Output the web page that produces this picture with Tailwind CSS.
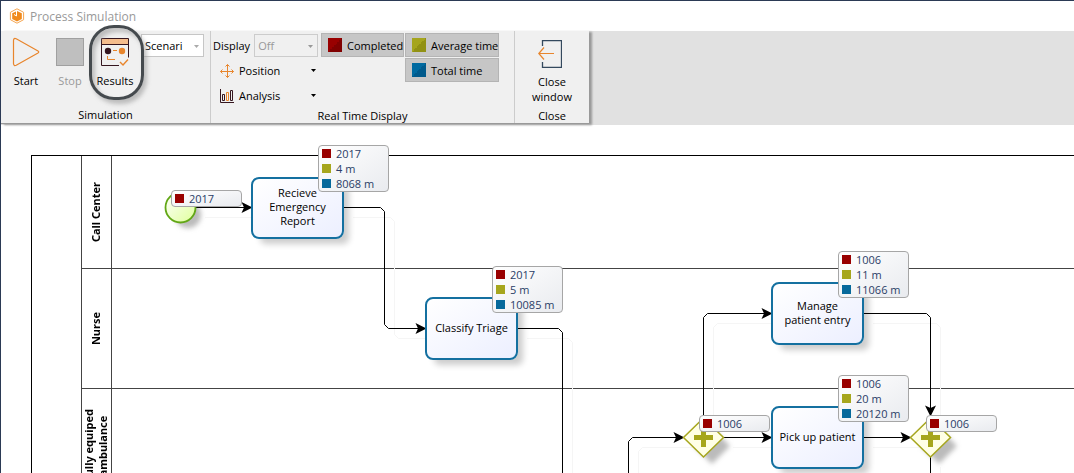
<!DOCTYPE html>
<html lang="en">
<head>
<meta charset="utf-8">
<title>Process Simulation</title>
<script src="https://cdn.jsdelivr.net/npm/@tailwindcss/browser@4"></script>
</head>
<body class="bg-white">
<div class="flex h-screen flex-col overflow-hidden border-t border-l border-[#2b3a55] bg-white font-['Open_Sans','Noto_Sans',sans-serif] text-[11px] leading-[15px] text-black">

  <header class="flex h-[30px] shrink-0 items-center gap-[5px] pl-2">
    <svg class="size-4" viewBox="0 0 16 16" aria-hidden="true">
      <path d="M8 .8 14.6 4.3V11.7L8 15.2 1.4 11.7V4.3Z" fill="#fff" stroke="#f5a550" stroke-width="1"/>
      <path d="M8 3 12.8 5.2V11L8 13.4 3.2 11V5.2Z" fill="#f08a1c"/>
      <path d="M7.500 3V8L5 6.500" fill="none" stroke="#fff" stroke-width="1"/>
    </svg>
    <h1 class="text-[12px] text-[#999]">Process Simulation</h1>
  </header>

  <div class="z-10 flex h-[94px] shrink-0 bg-[#e1e1e1]">
    <div class="flex h-[93px] border-b border-[#999] bg-[#f0f0f0] shadow-[3px_1px_2px_#999]">

      <section class="flex w-[210px] flex-col border-r border-[#ccc]">
        <div class="flex h-[76px] items-start pt-[6px]">
          <button class="flex w-[50px] flex-col items-center gap-[6px]">
            <svg class="h-[30px] w-7" viewBox="0 0 28 30" fill="none" stroke="#e8852c" stroke-width="1.2" aria-hidden="true"><path d="M1.5 3.2V26.8Q1.8 29.3 4.2 28.2L26 16Q27.5 15 26 14L4.2 1.8Q1.8.7 1.5 3.2Z"/></svg>
            Start
          </button>
          <button class="flex w-[38px] flex-col items-center gap-[7px] pt-px text-[#999]" disabled>
            <span class="size-7 border border-[#a0a0a0] bg-[#bfbfbf]"></span>
            Stop
          </button>
          <button class="relative flex w-[52px] flex-col items-center gap-[7px] pt-px">
            <svg class="size-7" viewBox="0 0 28 28" fill="none" aria-hidden="true">
              <path d="M.5.5H27.500V6.500H.5Z" fill="#f5bd8d"/>
              <path d="M18 27.500H.5V.5H27.500V19.500M.5 6.500H27.500" stroke="#35161f"/>
              <circle cx="7" cy="13" r="3.2" fill="#35161f"/><circle cx="21" cy="13" r="3.2" fill="#e8852c"/>
              <path d="M12 12.500H16M6.500 18V21.500H14" stroke="#e8852c"/>
              <path d="M19 24 22 27 27 21.500" stroke="#e8852c" stroke-width="1.4"/>
            </svg>
            Results
            <span class="absolute -top-3 left-0 z-10 h-[75px] w-[55px] rounded-[25px] border-[3px] border-[#454a4e] shadow-[3px_4px_4px_#9999,inset_3px_4px_4px_#9999]"></span>
          </button>
          <div class="relative -mt-[3px]">
            <select aria-label="Scenario" class="block h-[23px] w-[63px] appearance-none border border-[#c6c6c6] bg-white pl-[3px]"><option>Scenari</option></select>
            <svg class="absolute top-[11px] right-[5px] h-[3px] w-[5px]" viewBox="0 0 5 3" fill="#aaa" aria-hidden="true"><path d="M0 0H5L2.500 3Z"/></svg>
          </div>
        </div>
        <h2 class="text-center">Simulation</h2>
      </section>

      <section class="flex w-[304px] flex-col border-r border-[#ccc]">
        <div class="flex h-[78px] items-start pt-[2px]">
          <div class="w-[107px]">
            <div class="flex h-[25px] items-center gap-1 pl-[2px]">
              <label for="display">Display</label>
              <div class="relative ml-auto">
                <select id="display" disabled class="block h-[23px] w-16 appearance-none border border-[#ccc] pl-[3px] text-[#999]"><option>Off</option></select>
                <svg class="absolute top-[11px] right-[5px] h-[3px] w-[5px]" viewBox="0 0 5 3" fill="#999" aria-hidden="true"><path d="M0 0H5L2.500 3Z"/></svg>
              </div>
            </div>
            <button class="flex h-[25px] w-full items-center pr-[2px] pl-[9px]">
              <svg class="mr-[5px] size-[14px]" viewBox="0 0 14 14" fill="none" stroke="#e8852c" aria-hidden="true"><path d="M.5 7.500H13.500M7.500 .5V13.500M2.500 5.500 .5 7.500 2.500 9.500M11.500 5.500 13.500 7.500 11.500 9.500M5.500 2.500 7.500 .5 9.500 2.500M5.500 11.500 7.500 13.500 9.500 11.500"/></svg>
              Position
              <svg class="ml-auto h-[3px] w-[5px]" viewBox="0 0 5 3" aria-hidden="true"><path d="M0 0H5L2.500 3Z"/></svg>
            </button>
            <button class="flex h-[25px] w-full items-center pr-[2px] pl-[9px]">
              <svg class="mr-[5px] size-[14px]" viewBox="0 0 14 14" fill="none" stroke="#35161f" aria-hidden="true"><path d="M.5 0V13.500H14M2.500 5.500H4.500V11.500H2.500ZM10.500 1.500H12.500V11.500H10.500Z"/><path d="M6.500 3.500H8.500V11.500H6.500Z" stroke="#e8852c"/></svg>
              Analysis
              <svg class="ml-auto h-[3px] w-[5px]" viewBox="0 0 5 3" aria-hidden="true"><path d="M0 0H5L2.500 3Z"/></svg>
            </button>
          </div>
          <div class="grid grid-cols-[83px_94px] gap-px pl-[3px] whitespace-nowrap">
            <button class="flex h-6 items-center gap-[5px] border border-[#b4b4b4] bg-[#c6c6c6] pl-[6px]"><span class="size-[14px] shrink-0 bg-[linear-gradient(135deg,#990000_50%,#800000_50%)]"></span>Completed</button>
            <button class="flex h-6 items-center gap-[5px] border border-[#b4b4b4] bg-[#c6c6c6] pl-[6px]"><span class="size-[14px] shrink-0 bg-[linear-gradient(135deg,#a5a51d_50%,#919114_50%)]"></span>Average time</button>
            <button class="col-start-2 flex h-6 items-center gap-[5px] border border-[#b4b4b4] bg-[#c6c6c6] pl-[6px]"><span class="size-[14px] shrink-0 bg-[linear-gradient(135deg,#006aa0_50%,#005a8c_50%)]"></span>Total time</button>
          </div>
        </div>
        <h2 class="text-center">Real Time Display</h2>
      </section>

      <section class="flex w-[74px] flex-col">
        <button class="flex h-[78px] flex-col items-center gap-[6px] pt-[9px]">
          <svg class="mr-1 h-7 w-6" viewBox="0 0 24 28" fill="none" aria-hidden="true"><path d="M4.500 6V.5H23.500V27.500H4.500V22" stroke="#34495e" stroke-width="1.3"/><path d="M16 13.500H1M6 7.500 .8 13.500 6 19.500" stroke="#e8852c" stroke-width="1.2"/></svg>
          <span>Close<br>window</span>
        </button>
        <h2 class="text-center">Close</h2>
      </section>
    </div>
  </div>

  <main class="relative grow overflow-hidden pt-[30px] pl-[30px]">
    <!-- Pool and lanes -->
    <div class="flex border-t border-l border-black">
      <div class="w-[49px] shrink-0"></div>
      <div class="grow border-l border-[#444] font-['Noto_Sans','Open_Sans',sans-serif] leading-[14px] font-bold">
        <div class="flex h-[113px] border-b border-[#444]">
          <div class="flex w-[30px] items-center justify-center border-r border-[#444] pr-[2px]"><h3 class="rotate-180 text-center [writing-mode:vertical-rl]">Call Center</h3></div>
        </div>
        <div class="flex h-[120px] border-b border-[#444]">
          <div class="flex w-[30px] items-center justify-center border-r border-[#444] pr-[2px]"><h3 class="rotate-180 text-center [writing-mode:vertical-rl]">Nurse</h3></div>
        </div>
        <div class="flex h-[114px] border-b border-[#444]">
          <div class="flex w-[30px] items-center justify-center border-r border-[#444] pr-[2px]"><h3 class="rotate-180 text-center [writing-mode:vertical-rl]">Fully equiped<br>ambulance</h3></div>
        </div>
      </div>
    </div>

    <!-- Connectors, events and gateways -->
    <svg class="absolute top-0 left-0 h-[348px] w-[1073px]" viewBox="1 125 1073 348" fill="none" aria-hidden="true">
      <defs>
        <marker id="arrow" viewBox="0 0 12 12" markerWidth="12" markerHeight="12" refX="11" refY="6" orient="auto" markerUnits="userSpaceOnUse"><path d="M.5 .5 11.500 6 .5 11.500 3 6Z" fill="#000"/></marker>
        <filter id="soft" x="-30%" y="-30%" width="160%" height="160%"><feGaussianBlur stdDeviation="2.500"/></filter>
        <linearGradient id="green" x1="0" y1="0" x2="1" y2="1"><stop offset="0" stop-color="#fff"/><stop offset="1" stop-color="#dfff9a"/></linearGradient>
        <g id="flows">
          <path d="M195 207.500H252"/>
          <path d="M343 207.500H380.500L384.500 211.500V324.500L388.500 328.500H426"/>
          <path d="M628.500 480V441.500L632.500 437.500H684"/>
          <path d="M703.500 418V317.500L707.500 313.500H772"/>
          <path d="M723 437.500H772"/>
          <path d="M863 437.500H911"/>
          <path d="M863 313.500H926.500L930.500 317.500V416"/>
        </g>
        <g id="tails">
          <path d="M517 328.500H558.500L562.500 332.500V480"/>
          <path d="M930.500 457V480"/>
        </g>
      </defs>
      <g stroke="#f5f5f5"><use href="#flows" x="10" y="10"/><use href="#tails" x="10" y="10"/></g>
      <g fill="#bbb" filter="url(#soft)"><circle cx="188" cy="215" r="13"/><path d="M712 428 730 446 712 464 694 446ZM939 428 957 446 939 464 921 446Z"/></g>
      <g stroke="#000" marker-end="url(#arrow)">
        <path d="M195 207.500H252"/>
        <path d="M343 207.500H380.500L384.500 211.500V324.500L388.500 328.500H426"/>
        <path d="M628.500 480V441.500L632.500 437.500H684"/>
        <path d="M703.500 418V317.500L707.500 313.500H772"/>
        <path d="M723 437.500H772"/>
        <path d="M863 437.500H911"/>
        <path d="M863 313.500H926.500L930.500 317.500V416"/>
      </g>
      <use href="#tails" stroke="#000"/>
      <circle cx="180.500" cy="207.500" r="15" fill="url(#green)" stroke="#62a716" stroke-width="1.800"/>
      <g fill="#ffffe6" stroke="#a6a61d" stroke-width="1.500"><path d="M703.500 418 723.500 437.500 703.500 457 683.500 437.500Z"/><path d="M930.500 418 950.500 437.500 930.500 457 910.500 437.500Z"/></g>
      <path d="M703.500 428V447M694 437.500H713M930.500 428V447M921 437.500H940" stroke="#a6a61d" stroke-width="5"/>
    </svg>

    <!-- Activities -->
    <div class="absolute top-[52px] left-[250px] flex h-[62px] w-[93px] items-center justify-center rounded-lg border-2 border-[#1470a0] bg-linear-to-br from-white to-[#ecefff] pb-[2px] text-center leading-[14px] shadow-[7px_7px_6px_-2px_#0003]">Recieve<br>Emergency<br>Report</div>
    <div class="absolute top-[172px] left-[424px] flex h-[63px] w-[93px] items-center justify-center rounded-lg border-2 border-[#1470a0] bg-linear-to-br from-white to-[#ecefff] pb-[2px] text-center leading-[14px] shadow-[7px_7px_6px_-2px_#0003]">Classify Triage</div>
    <div class="absolute top-[157px] left-[770px] flex h-[63px] w-[93px] items-center justify-center rounded-lg border-2 border-[#1470a0] bg-linear-to-br from-white to-[#ecefff] pb-[2px] text-center leading-[14px] shadow-[7px_7px_6px_-2px_#0003]">Manage<br>patient entry</div>
    <div class="absolute top-[281px] left-[770px] flex h-[63px] w-[93px] items-center justify-center rounded-lg border-2 border-[#1470a0] bg-linear-to-br from-white to-[#ecefff] pb-[2px] text-center leading-[14px] shadow-[7px_7px_6px_-2px_#0003]">Pick up patient</div>

    <!-- Result badges -->
    <ul class="absolute top-[20px] left-[317px] w-[71px] rounded border border-[#a6a6a6] bg-linear-to-br from-white to-[#e9ebef] pl-[3px] text-[#2a3d66]">
      <li class="flex items-center gap-[5px]"><span class="size-[9px] bg-[#990000]"></span>2017</li>
      <li class="flex items-center gap-[5px]"><span class="size-[9px] bg-[#a6a61d]"></span>4 m</li>
      <li class="flex items-center gap-[5px]"><span class="size-[9px] bg-[#06699b]"></span>8068 m</li>
    </ul>
    <ul class="absolute top-[141px] left-[491px] w-[71px] rounded border border-[#a6a6a6] bg-linear-to-br from-white to-[#e9ebef] pl-[3px] text-[#2a3d66]">
      <li class="flex items-center gap-[5px]"><span class="size-[9px] bg-[#990000]"></span>2017</li>
      <li class="flex items-center gap-[5px]"><span class="size-[9px] bg-[#a6a61d]"></span>5 m</li>
      <li class="flex items-center gap-[5px]"><span class="size-[9px] bg-[#06699b]"></span>10085 m</li>
    </ul>
    <ul class="absolute top-[126px] left-[837px] w-[71px] rounded border border-[#a6a6a6] bg-linear-to-br from-white to-[#e9ebef] pl-[3px] text-[#2a3d66]">
      <li class="flex items-center gap-[5px]"><span class="size-[9px] bg-[#990000]"></span>1006</li>
      <li class="flex items-center gap-[5px]"><span class="size-[9px] bg-[#a6a61d]"></span>11 m</li>
      <li class="flex items-center gap-[5px]"><span class="size-[9px] bg-[#06699b]"></span>11066 m</li>
    </ul>
    <ul class="absolute top-[250px] left-[837px] w-[71px] rounded border border-[#a6a6a6] bg-linear-to-br from-white to-[#e9ebef] pl-[3px] text-[#2a3d66]">
      <li class="flex items-center gap-[5px]"><span class="size-[9px] bg-[#990000]"></span>1006</li>
      <li class="flex items-center gap-[5px]"><span class="size-[9px] bg-[#a6a61d]"></span>20 m</li>
      <li class="flex items-center gap-[5px]"><span class="size-[9px] bg-[#06699b]"></span>20120 m</li>
    </ul>
    <div class="absolute top-[65px] left-[170px] flex w-[71px] items-center gap-[5px] rounded border border-[#a6a6a6] bg-linear-to-br from-white to-[#e9ebef] pl-[3px] text-[#2a3d66]"><span class="size-[9px] bg-[#990000]"></span>2017</div>
    <div class="absolute top-[290px] left-[698px] flex w-[71px] items-center gap-[5px] rounded border border-[#a6a6a6] bg-linear-to-br from-white to-[#e9ebef] pl-[3px] text-[#2a3d66]"><span class="size-[9px] bg-[#990000]"></span>1006</div>
    <div class="absolute top-[290px] left-[925px] flex w-[71px] items-center gap-[5px] rounded border border-[#a6a6a6] bg-linear-to-br from-white to-[#e9ebef] pl-[3px] text-[#2a3d66]"><span class="size-[9px] bg-[#990000]"></span>1006</div>
  </main>
</div>
</body>
</html>
